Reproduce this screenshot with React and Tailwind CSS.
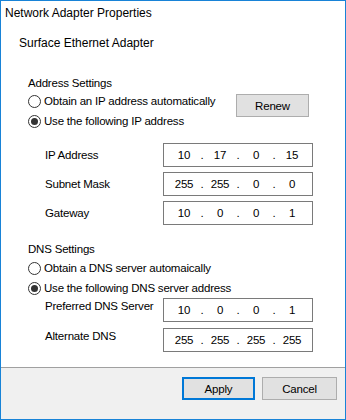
import React from 'react';

const Radio = ({ checked, label }) => (
    <div className="flex items-center h-[16px]">
        <span className="w-[13px] h-[13px] rounded-full border border-[#333333] bg-white flex items-center justify-center shrink-0">
            {checked && <span className="w-[7px] h-[7px] rounded-full bg-[#333333]"></span>}
        </span>
        <span className="ml-[3px] whitespace-nowrap">{label}</span>
    </div>
);

const IpBox = ({ parts }) => (
    <div className="w-[150px] h-[24px] border border-[#7a7a7a] bg-white flex items-center pl-[6px]">
        {parts.map((p, i) => (
            <React.Fragment key={i}>
                {i > 0 && <span className="w-[8px] text-center">.</span>}
                <span className="w-[28px] text-center">{p}</span>
            </React.Fragment>
        ))}
    </div>
);

const FieldRow = ({ label, parts, className = '', labelClass = '' }) => (
    <div className={`flex items-center ${className}`}>
        <span className={`w-[118px] pl-[44px] whitespace-nowrap box-content ${labelClass}`}>{label}</span>
        <IpBox parts={parts} />
    </div>
);

const Button = ({ children, primary, className = '' }) => (
    <button
        className={`h-[23px] bg-[#e1e1e1] flex items-center justify-center ${primary ? 'border-2 border-[#0078d7]' : 'border border-[#adadad]'} ${className}`}
    >
        {children}
    </button>
);

export default function App() {
    return (
        <div
            className="w-[346px] h-[420px] border border-[#1883d7] flex flex-col bg-white text-black text-[11.5px] tracking-[-0.2px] leading-[16px]"
            style={{ fontFamily: '"Liberation Sans", Arial, sans-serif' }}
        >
            <div className="flex-1 flex flex-col">
                <div className="pt-[4px] pl-[4px] text-[12px] tracking-normal">Network Adapter Properties</div>
                <div className="mt-[14px] pl-[18px] text-[12px] tracking-normal">Surface Ethernet Adapter</div>

                {/* Address settings */}
                <div className="mt-[24px] pl-[27px]">Address Settings</div>
                <div className="flex pl-[27px] mt-[2px]">
                    <div className="flex flex-col gap-[4px] w-[208px]">
                        <Radio label="Obtain an IP address automatically" />
                        <Radio checked label="Use the following IP address" />
                    </div>
                    <Button className="w-[73px] mt-[1px]">Renew</Button>
                </div>

                <div className="flex flex-col gap-[5px] mt-[14px]">
                    <FieldRow label="IP Address" parts={['10', '17', '0', '15']} />
                    <FieldRow label="Subnet Mask" parts={['255', '255', '0', '0']} />
                    <FieldRow label="Gateway" parts={['10', '0', '0', '1']} />
                </div>

                {/* DNS settings */}
                <div className="mt-[16px] pl-[27px]">DNS Settings</div>
                <div className="flex flex-col gap-[4px] pl-[27px] mt-[3px]">
                    <Radio label="Obtain a DNS server automaically" />
                    <Radio checked label="Use the following DNS server address" />
                </div>
                <div className="flex flex-col gap-[6px] mt-[2px]">
                    <FieldRow label="Preferred DNS Server" parts={['10', '0', '0', '1']} labelClass="-mt-[9px]" />
                    <FieldRow label="Alternate DNS" parts={['255', '255', '255', '255']} labelClass="-mt-[9px]" />
                </div>
            </div>

            <div className="h-[52px] border-t border-[#a0a0a0] bg-[#f0f0f0] flex justify-end gap-[7px] pt-[9px] pr-[8px]">
                <Button primary className="w-[73px]">Apply</Button>
                <Button className="w-[75px]">Cancel</Button>
            </div>
        </div>
    );
}
